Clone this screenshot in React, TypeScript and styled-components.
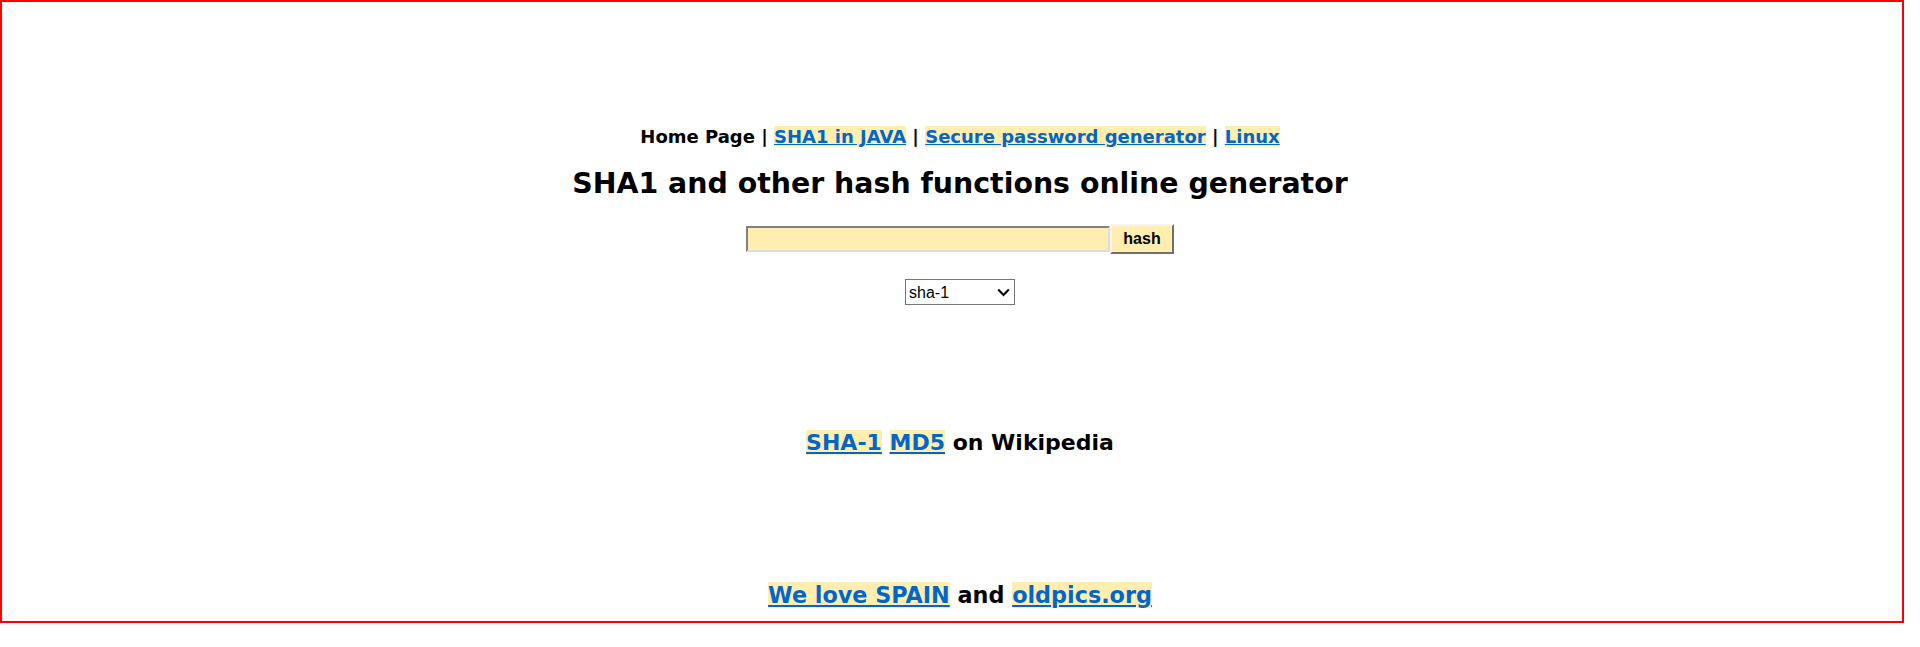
import styled, { createGlobalStyle } from 'styled-components';

const GlobalStyle = createGlobalStyle`
  html, body {
    margin: 0;
    padding: 0;
    background: #ffffff;
  }
  body {
    font-family: 'DejaVu Sans', Verdana, sans-serif;
    color: #000000;
  }
`;

const Page = styled.div`
  box-sizing: border-box;
  width: 1904px;
  height: 623px;
  border: 2px solid #ff0000;
  padding-left: 16px;
  display: flex;
  flex-direction: column;
  align-items: center;
  text-align: center;
`;

const Link = styled.a`
  color: #0066cc;
  background-color: #ffeeb0;
  text-decoration: underline;
`;

const Nav = styled.div`
  margin-top: 125px;
  font-size: 18px;
  line-height: 20px;
  font-weight: bold;
  white-space: nowrap;
`;

const Title = styled.h1`
  margin: 21px 0 0;
  font-size: 28.4px;
  line-height: 32px;
  font-weight: bold;
  white-space: nowrap;
`;

const HashForm = styled.form`
  margin-top: 24px;
  height: 30px;
  display: flex;
  align-items: center;
`;

const TextInput = styled.input`
  box-sizing: border-box;
  width: 364px;
  height: 26px;
  margin: 0;
  padding: 1px 3px;
  background: #ffeeb0;
  border-style: solid;
  border-width: 2px;
  border-color: #808080 #dcdcdc #dcdcdc #808080;
  font-family: 'Liberation Sans', Arial, sans-serif;
  font-size: 14px;
  outline: none;
`;

const HashButton = styled.button`
  box-sizing: border-box;
  width: 64px;
  height: 30px;
  margin: 0;
  padding: 0;
  background: #ffeeb0;
  border-style: solid;
  border-width: 2px;
  border-color: #f4f4f4 #707070 #707070 #f4f4f4;
  font-family: 'Liberation Sans', Arial, sans-serif;
  font-size: 16px;
  font-weight: bold;
  color: #000000;
`;

const SelectWrap = styled.span`
  position: relative;
  margin-top: 25px;
  display: inline-block;
  width: 110px;
  height: 26px;
`;

const AlgoSelect = styled.select`
  box-sizing: border-box;
  appearance: none;
  -webkit-appearance: none;
  width: 110px;
  height: 26px;
  margin: 0;
  padding: 0 0 0 3px;
  background: #ffffff;
  border: 1px solid #767676;
  border-radius: 0;
  font-family: 'Liberation Sans', Arial, sans-serif;
  font-size: 16px;
  color: #000000;
  text-align: left;
`;

const Chevron = styled.svg`
  position: absolute;
  right: 5px;
  top: 9px;
  width: 13px;
  height: 9px;
  pointer-events: none;
`;

const BigLine = styled.div<{ $gap: number; $size: number }>`
  margin-top: ${(p) => p.$gap}px;
  font-size: ${(p) => p.$size}px;
  line-height: 24px;
  font-weight: bold;
  white-space: nowrap;
`;

export default function App() {
  return (
    <>
      <GlobalStyle />
      <Page>
        <Nav>
          Home Page | <Link href='#'>SHA1 in JAVA</Link> | <Link href='#'>Secure password generator</Link> |{' '}
          <Link href='#'>Linux</Link>
        </Nav>
        <Title>SHA1 and other hash functions online generator</Title>
        <HashForm onSubmit={(e) => e.preventDefault()}>
          <TextInput type='text' />
          <HashButton type='submit'>hash</HashButton>
        </HashForm>
        <SelectWrap>
          <AlgoSelect defaultValue='sha-1'>
            <option value='sha-1'>sha-1</option>
            <option value='sha-256'>sha-256</option>
            <option value='sha-384'>sha-384</option>
            <option value='sha-512'>sha-512</option>
            <option value='md5'>md5</option>
          </AlgoSelect>
          <Chevron viewBox='0 0 13 9'>
            <path d='M1.2 1.5 L6.5 7 L11.8 1.5' fill='none' stroke='#000' strokeWidth='2' />
          </Chevron>
        </SelectWrap>
        <BigLine $gap={126} $size={22}>
          <Link href='#'>SHA-1</Link> <Link href='#'>MD5</Link> on Wikipedia
        </BigLine>
        <BigLine $gap={128} $size={22.3}>
          <Link href='#'>We love SPAIN</Link> and <Link href='#'>oldpics.org</Link>
        </BigLine>
      </Page>
    </>
  );
}
